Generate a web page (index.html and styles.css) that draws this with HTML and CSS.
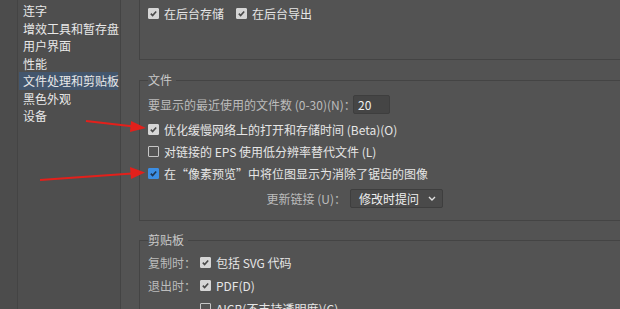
FILE: index.html
```html
<!DOCTYPE html>
<html lang="zh-CN">
<head>
  <meta charset="UTF-8">
  <title>首选项 - 文件处理和剪贴板</title>
  <link rel="stylesheet" href="styles.css">
</head>
<body>
  <div class="window">
    <!-- 左侧窄条 -->
    <div class="edge"></div>

    <!-- 分类列表 -->
    <ul class="sidebar">
      <li>连字</li>
      <li>增效工具和暂存盘</li>
      <li>用户界面</li>
      <li>性能</li>
      <li class="active">文件处理和剪贴板</li>
      <li>黑色外观</li>
      <li>设备</li>
    </ul>

    <div class="main">
      <!-- 上一组（被滚动截断） -->
      <div class="group-top">
        <div class="row pair">
          <label class="check"><span class="box on"><svg viewBox="0 0 10 10"><path d="M2 5.2l2 2.1 4-4.6"/></svg></span>在后台存储</label>
          <label class="check"><span class="box on"><svg viewBox="0 0 10 10"><path d="M2 5.2l2 2.1 4-4.6"/></svg></span>在后台导出</label>
        </div>
      </div>

      <fieldset class="group files">
        <legend>文件</legend>
        <div class="row">
          <span class="label recent">要显示的最近使用的文件数 (0-30)(N)：</span>
          <span class="field num">20</span>
        </div>
        <div class="row gap">
          <label class="check"><span class="box on"><svg viewBox="0 0 10 10"><path d="M2 5.2l2 2.1 4-4.6"/></svg></span>优化缓慢网络上的打开和存储时间 (Beta)(O)</label>
        </div>
        <div class="row">
          <label class="check"><span class="box"></span>对链接的 EPS 使用低分辨率替代文件 (L)</label>
        </div>
        <div class="row">
          <label class="check"><span class="box blue"><svg viewBox="0 0 10 10"><path d="M2 5.2l2 2.1 4-4.6"/></svg></span>在“像素预览”中将位图显示为消除了锯齿的图像</label>
        </div>
        <div class="row gap">
          <span class="label links">更新链接 (U)：</span>
          <span class="field select">修改时提问
            <svg class="chev" viewBox="0 0 8 5"><path d="M1 1l3 3 3-3"/></svg>
          </span>
        </div>
      </fieldset>

      <fieldset class="group clip">
        <legend>剪贴板</legend>
        <div class="row">
          <span class="label side">复制时：</span>
          <label class="check"><span class="box on"><svg viewBox="0 0 10 10"><path d="M2 5.2l2 2.1 4-4.6"/></svg></span>包括 SVG 代码</label>
        </div>
        <div class="row">
          <span class="label side">退出时：</span>
          <label class="check"><span class="box on"><svg viewBox="0 0 10 10"><path d="M2 5.2l2 2.1 4-4.6"/></svg></span>PDF(D)</label>
        </div>
        <div class="row">
          <span class="label side"></span>
          <label class="check"><span class="box"></span>AICB(不支持透明度)(C)</label>
        </div>
      </fieldset>
    </div>

    <!-- 标注箭头 -->
    <svg class="arrows" width="620" height="309" viewBox="0 0 620 309">
      <line x1="86" y1="121" x2="134" y2="126.5"/>
      <polygon points="146,128 131,121 130,132"/>
      <line x1="40" y1="180" x2="132" y2="173.5"/>
      <polygon points="145,172.5 130,167 131,179"/>
    </svg>
  </div>
</body>
</html>
```

FILE: styles.css
```css
html, body {
  margin: 0;
  height: 100%;
  overflow: hidden;
}
body {
  background-color: #535353;
  font-family: "Noto Sans CJK SC", "Liberation Sans", sans-serif;
  font-size: 12px;
  color: #e4e4e4;
}
.window {
  position: relative;
  display: flex;
  height: 309px;
}
.edge {
  width: 17px;
  background-color: #4c4c4c;
  border-right: 1px solid #444;
}
.sidebar {
  list-style: none;
  margin: 0;
  padding: 2px 2px 0 1px;
  width: 99px;
  background-color: #4e4e4e;
  border-right: 1px solid #444;
}
.sidebar li {
  height: 17.5px;
  line-height: 17.5px;
  padding-left: 4px;
  white-space: nowrap;
  color: #e8e8e8;
}
.sidebar li.active {
  background-color: #43566d;
}
.main {
  flex: 1;
  margin-left: 18px;
}
.group-top {
  box-sizing: border-box;
  height: 61px;
  margin-top: -1px;
  border-left: 1px solid #444;
  border-bottom: 1px solid #444;
  padding: 3px 0 0 8px;
}
.row.pair {
  gap: 12px;
}
.group {
  margin: 0;
  border: 1px solid #444;
  border-right: none;
  padding: 0 0 0 8px;
  min-width: 0;
}
.group legend {
  padding: 0 4px 0 0;
  line-height: 16px;
  color: #c9c9c9;
}
.files {
  margin-top: 12px;
  padding-top: 5px;
  padding-bottom: 11px;
}
.clip {
  margin-top: 11px;
  padding-top: 3px;
}
.row {
  display: flex;
  align-items: center;
  height: 22px;
  white-space: nowrap;
}
.row.gap {
  margin-top: 3px;
}
.clip .row + .row {
  margin-top: 1px;
}
.label {
  color: #bcbcbc;
}
.recent {
  width: 205px;
}
.links {
  width: 198px;
  text-align: right;
  margin-right: 4px;
}
.side {
  width: 52px;
}
.check {
  display: flex;
  align-items: center;
  gap: 5px;
  color: #e6e6e6;
}
.box {
  box-sizing: border-box;
  width: 11px;
  height: 11px;
  border: 1px solid #c6c6c6;
  border-radius: 1px;
  display: flex;
}
.box svg {
  width: 9px;
  height: 9px;
  fill: none;
  stroke: #4a4a4a;
  stroke-width: 1.8;
}
.box.on {
  background-color: #d6d6d6;
  border-color: #d6d6d6;
}
.box.blue {
  background-color: #3c8ee3;
  border-color: #3c8ee3;
}
.box.blue svg {
  stroke: #1f3550;
}
.field {
  box-sizing: border-box;
  height: 19px;
  line-height: 17px;
  background-color: #454545;
  border: 1px solid #3e3e3e;
  border-radius: 2px;
  color: #f0f0f0;
}
.num {
  width: 37px;
  padding-left: 4px;
}
.select {
  position: relative;
  width: 93px;
  padding-left: 8px;
  background-color: #4a4a4a;
}
.chev {
  position: absolute;
  right: 6px;
  top: 6px;
  width: 8px;
  height: 5px;
  fill: none;
  stroke: #e0e0e0;
  stroke-width: 1.4;
}
.arrows {
  position: absolute;
  left: 0;
  top: 0;
  pointer-events: none;
}
.arrows line {
  stroke: #e3201b;
  stroke-width: 2;
}
.arrows polygon {
  fill: #e3201b;
}
```
